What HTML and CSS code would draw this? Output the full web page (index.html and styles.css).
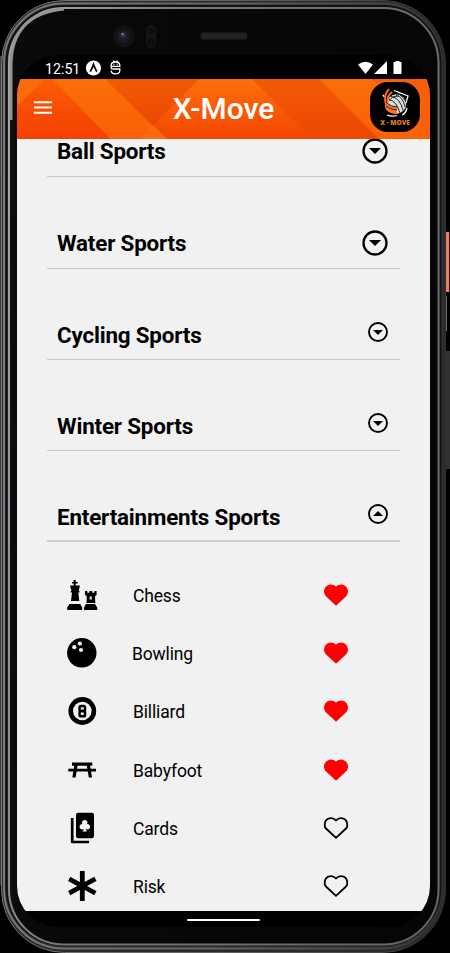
FILE: index.html
```html
<!DOCTYPE html>
<html lang="en">
<head>
<meta charset="utf-8">
<title>X-Move</title>
<link rel="stylesheet" href="styles.css">
</head>
<body>
<svg class="shell" viewBox="0 0 450 953" aria-hidden="true">
  <defs>
    <linearGradient id="metal" x1="0" y1="0" x2="1" y2="0">
      <stop offset="0" stop-color="#77797b"/><stop offset=".5" stop-color="#606162"/><stop offset=".85" stop-color="#444648"/><stop offset="1" stop-color="#303133"/>
    </linearGradient>
    <linearGradient id="shine" x1="0" y1="0" x2="1" y2=".3">
      <stop offset="0" stop-color="#aaa"/><stop offset=".4" stop-color="#777"/><stop offset="1" stop-color="#66686a"/>
    </linearGradient>
    <linearGradient id="bezel" x1="0" y1="0" x2="1" y2="0">
      <stop offset="0" stop-color="#101114"/><stop offset=".02" stop-color="#08090b"/><stop offset="1" stop-color="#060608"/>
    </linearGradient>
  </defs>
  <path d="M0 56h4v252H0z" fill="#3e4042"/>
  <path d="M0 175h2v710H0z" fill="#38393b"/>
  <path d="M446 232h3.2v60H446z" fill="#ef7b68"/>
  <path d="M446 296h1v35h-1z" fill="#666"/>
  <path d="M446 351h4v118h-4z" fill="#303234"/>
  <rect x="1.5" y=".5" width="444" height="952" rx="63" fill="#292b2d" stroke="url(#metal)"/>
  <rect x="4" y="3.5" width="438" height="945" rx="60" fill="none" stroke="url(#metal)" stroke-width="2"/>
  <rect x="6.5" y="6" width="434" height="939" rx="58" fill="none" stroke="#111214" stroke-width="2"/>
  <rect x="9" y="8" width="429.5" height="936.500" rx="55" fill="url(#bezel)" stroke="url(#shine)" stroke-width="2"/>
  <path d="M11 120V66Q11 14 64 9" fill="none" stroke="#929496" stroke-width="3"/>
  <circle cx="124" cy="36.500" r="11" fill="#111114"/>
  <circle cx="123.500" cy="36.500" r="6.500" fill="#1b1b22"/>
  <circle cx="123" cy="35" r="2.500" fill="#343858"/>
  <circle cx="122.500" cy="34" r=".8" fill="#c6c9e0"/>
  <rect x="146" y="25" width="10" height="23" rx="5" fill="#151517"/>
  <circle cx="151" cy="31" r="3.500" fill="#0d0d0f"/><circle cx="151" cy="42" r="3.500" fill="#0d0d0f"/>
  <rect x="200.500" y="32.500" width="47" height="7" rx="3" fill="#202022"/>
  <path d="M203 36h42" stroke="#29292b" stroke-width="3" stroke-dasharray="2 1.5"/>
</svg>

<main class="screen">
  <div class="status">
    <span class="time">12:51</span>
    <svg class="status-left" viewBox="0 0 38 18">
      <circle cx="7.500" cy="9" r="7.600" fill="#fff"/>
      <path d="M4.200 12.600Q6.300 9 7.500 5.500Q8.700 9 10.800 12.600" fill="none" stroke="#000" stroke-width="1.800"/>
      <g fill="none" stroke="#fff" stroke-width="1.300"><path d="M33.800 7.300H25.200V6.200q0-3.200 4.300-3.200t4.300 3.200zM25.200 7.500v.9q0 1.600 2 1.600h6.600v1.500q0 3.300-4.300 3.300t-4.300-3.300M27.500 1.500l1 1.500M31.500 1.500l-1 1.500"/><path d="M27.500 5.400h1M30.700 5.400h1"/></g>
    </svg>
    <svg class="status-right" viewBox="0 0 46 16">
      <path d="M0 4.500Q7.500-1 15 4.500L7.500 14zM16 14L29 1v13zM37.500 1h4v1h2v12h-8V2h2z" fill="#fff"/>
    </svg>
  </div>

  <header class="bar">
    <svg class="bar-art" viewBox="0 0 413 60" preserveAspectRatio="none" aria-hidden="true">
      <defs>
        <linearGradient id="hot" x1="0" y1="0" x2="0" y2="1"><stop offset="0" stop-color="#fb5c07"/><stop offset="1" stop-color="#f54000"/></linearGradient>
        <linearGradient id="amber" x1="0" y1="0" x2="0" y2="1"><stop offset="0" stop-color="#fa6e07"/><stop offset="1" stop-color="#fb6009"/></linearGradient>
        <linearGradient id="deep" x1="0" y1="0" x2="0" y2="1"><stop offset="0" stop-color="#f15b03"/><stop offset="1" stop-color="#ec4706"/></linearGradient>
        <linearGradient id="glow" x1="0" y1="0" x2="0" y2="1"><stop offset="0" stop-color="#fb700a"/><stop offset="1" stop-color="#f44602"/></linearGradient>
      </defs>
      <path d="M0 0h413v60H0z" fill="url(#hot)"/>
      <path d="M0 0h28L0 27z" fill="#fa6b0b"/>
      <path d="M35 0h56l61 60H94z" fill="url(#amber)"/>
      <path d="M88 0h94l-46 47z" fill="url(#deep)"/>
      <path d="M182 0h53l60 60H150l-14-13z" fill="url(#glow)"/>
      <path d="M136 46l14 14h-27z" fill="#fb6a12"/>
      <path d="M235 0h67l60 60h-67z" fill="url(#deep)"/>
      <path d="M302 0h53l58 56v4h-51z" fill="url(#amber)"/>
      <path d="M355 0h58v56z" fill="#f7600a"/>
    </svg>
    <svg class="menu" viewBox="0 0 18 13"><path d="M0 1.300h18M0 6.500h18M0 11.700h18" stroke="#fff" stroke-width="2"/></svg>
    <h1>X-Move</h1>
    <div class="logo">
      <svg viewBox="0 0 30 30">
        <path d="M3 7l1.500 2M14 2.500q5 2 14 5.500l-2 7M7 27q5 2 10 .5M22 27q4-2 5-7" fill="none" stroke="#fff" stroke-width="1.300"/>
        <circle cx="16.500" cy="16" r="9.700" fill="#ddd"/>
        <path d="M5.500 14q3 4 12 5l-1 7Q7 26 5 19z" fill="#ff7624"/>
        <path d="M9 1Q3 7 6 17M12 4Q6 9 8 15" fill="none" stroke="#ff6b22" stroke-width="1.800"/>
        <g fill="none" stroke="#222" stroke-width="1"><path d="M9 12q7 0 11 13M11 8.500q9 1 12 14M16 7q7 2 9 12M20 7q4 2 6 7M17.500 19q-6 0-11-4M17 22q-6 0-11-4M9 12q5-5 10-4"/></g>
      </svg>
      <span>X - MOVE</span>
    </div>
  </header>

  <section class="content">
    <div class="sections">
      <div class="section first"><h2>Ball Sports</h2><svg class="arrow large" viewBox="0 0 26 26"><circle cx="13" cy="13" r="11.500"/><path d="M7 10h12l-6 6z"/></svg></div>
      <div class="section second"><h2>Water Sports</h2><svg class="arrow large" viewBox="0 0 26 26"><circle cx="13" cy="13" r="11.500"/><path d="M7 10h12l-6 6z"/></svg></div>
      <div class="section"><h2>Cycling Sports</h2><svg class="arrow" viewBox="0 0 20 20"><circle cx="10" cy="10" r="9"/><path d="M5 8h10l-5 5z"/></svg></div>
      <div class="section"><h2>Winter Sports</h2><svg class="arrow" viewBox="0 0 20 20"><circle cx="10" cy="10" r="9"/><path d="M5 8h10l-5 5z"/></svg></div>
      <div class="section open"><h2>Entertainments Sports</h2><svg class="arrow" viewBox="0 0 20 20"><circle cx="10" cy="10" r="9"/><path d="M5 12h10l-5-5z"/></svg></div>
    </div>

    <ul class="sports">
      <li><svg class="icon" viewBox="0 0 32 32"><path d="M7.700 1h2v2h2v1.600h-2V6.500H14l-1.300 5.500h.8v1.600h-1.200l1 8.400H5l1-8.400H4.700V12h.8L4 6.500h3.700V4.600H6V3h1.700zM3.500 25h10.700l2 3.500V31H1.200v-2.500zM19 12h2.300v1.700h2V12h3v1.700h2V12h2.300v4l-1.500 1v5.500h.3V24h-9v-1.500h.3V17L19 16zM20 25h9l2.200 3.500V31H18v-2.500z"/><path d="M23.700 17.500h2v3h-2z" fill="#f1f1f1"/></svg><span>Chess</span><svg class="heart full" viewBox="0 0 26 24"><use href="#heart"/></svg></li>
      <li class="bowling"><svg class="icon" viewBox="0 0 32 32"><circle cx="15.800" cy="15.800" r="14.700"/><g fill="#f1f1f1"><circle cx="8.300" cy="10.200" r="2.100"/><circle cx="13.900" cy="6.600" r="2.100"/><circle cx="15" cy="13" r="2.100"/></g></svg><span>Bowling</span><svg class="heart full" viewBox="0 0 26 24"><use href="#heart"/></svg></li>
      <li><svg class="icon" viewBox="0 0 32 32"><circle cx="16.300" cy="16" r="13.900"/><circle cx="16.300" cy="16" r="9.300" fill="#f1f1f1"/><g fill="none" stroke="#000" stroke-width="2.500"><rect x="13.600" y="10.900" width="5.400" height="5" rx="1.300"/><rect x="13.600" y="15.900" width="5.400" height="5.300" rx="1.300"/></g></svg><span>Billiard</span><svg class="heart full" viewBox="0 0 26 24"><use href="#heart"/></svg></li>
      <li><svg class="icon" viewBox="0 0 32 32"><path d="M6 8.500h20.300v3.200h-2.200l.5 3h5.400v2.900h-5l1 6h-3.200l-1-6H10.600l-1 6H6.300l1-6H2.300v-2.900h5.500l.5-3H6zM11.500 11.700l-.5 3h10.300l-.5-3z" fill-rule="evenodd"/></svg><span>Babyfoot</span><svg class="heart full" viewBox="0 0 26 24"><use href="#heart"/></svg></li>
      <li><svg class="icon" viewBox="0 0 32 32"><rect x="10" y=".8" width="18" height="25.500" rx="2.300"/><path d="M6.200 6v24H23" fill="none" stroke="#000" stroke-width="2.700" stroke-linejoin="round"/><g fill="#f1f1f1"><circle cx="18.700" cy="10.600" r="2.700"/><circle cx="16.300" cy="14.700" r="2.700"/><circle cx="21.300" cy="14.700" r="2.700"/><path d="M18 11h1.500l.3 6.500 1.200 2h-4.500l1.200-2z"/></g></svg><span>Cards</span><svg class="heart" viewBox="0 0 26 24"><use href="#heart"/></svg></li>
      <li><svg class="icon" viewBox="0 0 32 32"><path d="M16.300 3.300v25.400M5.300 10l22 12M27.300 10l-22 12" stroke="#000" stroke-width="4.800" stroke-linecap="square"/></svg><span>Risk</span><svg class="heart" viewBox="0 0 26 24"><use href="#heart"/></svg></li>
    </ul>
  </section>
  <div class="navigation"><i></i></div>
</main>
<svg class="symbols" aria-hidden="true"><symbol id="heart" viewBox="0 0 26 24"><path d="M13 21.800L3 12.500C1.500 11 1.500 9 1.800 7.500C2.700 2 9.500.5 13 4.500C16.500.5 23.300 2 24.200 7.500C24.500 9 24.500 11 23 12.500z"/></symbol></svg>
</body>
</html>
```
FILE: styles.css
```css
* { box-sizing: border-box; }
body {
  margin: 0;
  width: 450px;
  height: 953px;
  overflow: hidden;
  background: #000;
  font-family: Roboto, "Liberation Sans", sans-serif;
  color: #000;
}
svg { display: block; }
h1, h2, ul { margin: 0; padding: 0; }
.shell { position: absolute; inset: 0; width: 450px; height: 953px; }
.symbols { width: 0; height: 0; }
.screen {
  position: relative;
  display: flex;
  flex-direction: column;
  width: 413px;
  height: 872px;
  margin: 55px 0 0 17px;
  border-radius: 41px;
  overflow: hidden;
  background: #000;
}
.status { display: flex; align-items: center; height: 24px; padding: 2px 26px 0 28px; color: #fff; }
.time { width: 41px; padding-top: 1px; font-size: 14.2px; line-height: 22px; }
.status-left { width: 38px; height: 18px; }
.status-right { width: 46px; height: 16px; margin-left: auto; }
.bar {
  position: relative;
  display: grid;
  grid-template-columns: 60px 1fr 60px;
  align-items: center;
  height: 60px;
  flex: none;
}
.bar-art { position: absolute; inset: 0; width: 413px; height: 60px; }
.menu { position: relative; width: 18px; height: 13px; margin: -3px 0 0 17px; }
h1 { position: relative; text-align: center; color: #fff; font-size: 30px; font-weight: 500; line-height: 34px; }
.logo {
  position: relative;
  display: flex;
  flex-direction: column;
  align-items: center;
  width: 50px;
  height: 50px;
  margin: -5px 0 0;
  padding-top: 6px;
  border-radius: 18px;
  background: #000;
}
.logo svg { width: 30px; height: 30px; }
.logo span { color: #d97c2a; font-family: "Open Sans", sans-serif; font-size: 6.5px; font-weight: 800; line-height: 10px; white-space: nowrap; }
.content { flex: none; height: 772px; background: #f1f1f1; overflow: hidden; }
.sections { padding: 0 30px; }
.section {
  display: flex;
  align-items: flex-end;
  justify-content: space-between;
  height: 91px;
  padding: 0 12px 10px 10px;
  border-bottom: 1px solid #c8c8c8;
}
.section.first { height: 38px; }
.section.second { height: 92px; }
h2 { font-size: 22.4px; font-weight: 700; line-height: 28px; letter-spacing: -.18px; white-space: nowrap; }
.first h2, .second h2 { margin-bottom: 1px; }
.arrow { width: 20px; height: 20px; margin-bottom: 7px; }
.arrow.large { width: 26px; height: 26px; margin-bottom: 2px; }
.arrow circle { fill: none; stroke: #000; stroke-width: 1.9; }
.arrow.large circle { stroke-width: 2.3; }
.section.open { border-bottom: 2px solid #cfcfcf; }
.open h2, .open .arrow { position: relative; top: 1px; }
.sports { list-style: none; padding: 24px 81px 0 49px; }
.sports li { display: flex; align-items: center; height: 58.2px; }
.icon { width: 32px; height: 32px; }
.sports span { flex: 1; margin-left: 35px; padding-top: 2px; font-size: 17.5px; line-height: 24px; letter-spacing: -.15px; }
.sports .bowling span { margin-left: 34px; }
.heart { width: 26px; height: 24px; fill: none; stroke: #000; stroke-width: 1.8; }
.heart.full { fill: #f00; stroke: #f00; stroke-width: 1.3; }
.navigation { display: flex; justify-content: center; height: 16px; padding-top: 8px; }
.navigation i { width: 73px; height: 2px; border-radius: 1px; background: #fff; }
```
